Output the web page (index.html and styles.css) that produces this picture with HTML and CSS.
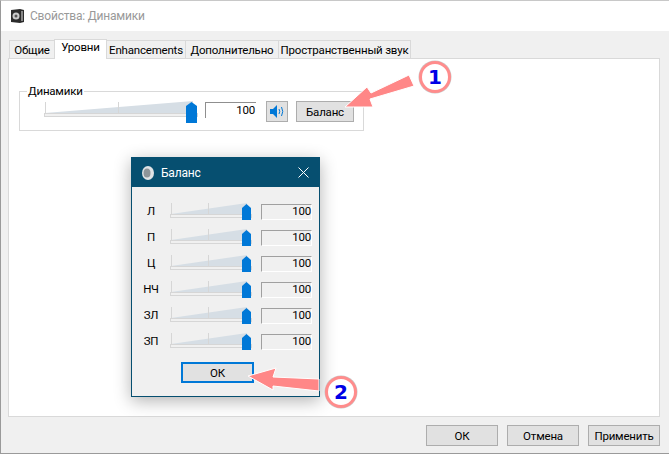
FILE: index.html
```html
<!DOCTYPE html>
<html lang="ru">
<head>
  <meta charset="UTF-8">
  <title>Свойства: Динамики</title>
  <link rel="stylesheet" href="styles.css">
</head>
<body>
  <svg class="defs" width="0" height="0">
    <symbol id="small-slider" viewBox="0 0 82 18">
      <path d="M1 11 L77 0 V11 Z" fill="#d6dee5"/>
      <rect x="0.500" y="11.500" width="81" height="3" fill="#f0f0f0" stroke="#d6d6d6"/>
      <rect x="1" y="0" width="1" height="11" fill="#d6d6d6"/>
      <rect x="38" y="0" width="1" height="11" fill="#d6d6d6"/>
      <path d="M72 17 V5 L76.500 1 L81 5 V17 Z" fill="#0078d7"/>
    </symbol>
  </svg>

  <div class="window">
    <div class="titlebar">
      <svg class="app-icon" width="13" height="14" viewBox="0 0 13 14">
        <path d="M0 1 L9 0 L13 1 V13 L9 14 L0 13 Z" fill="#2b2b2b"/>
        <circle cx="5" cy="7" r="3.500" fill="#c9c9c9"/>
        <circle cx="5" cy="7" r="1.500" fill="#555"/>
        <rect x="10" y="2" width="2" height="10" fill="#888"/>
      </svg>
      <span>Свойства: Динамики</span>
    </div>

    <div class="tabs">
      <div class="tab tab-first">Общие</div>
      <div class="tab tab-active">Уровни</div>
      <div class="tab tab-en">Enhancements</div>
      <div class="tab tab-more">Дополнительно</div>
      <div class="tab tab-space">Пространственный звук</div>
    </div>

    <div class="panel">
      <fieldset class="group">
        <legend>Динамики</legend>
        <svg class="slider" width="154" height="22" viewBox="0 0 154 22">
          <path d="M1 12 L149 0 V12 Z" fill="#d6dee5"/>
          <rect x="0.500" y="12.500" width="153" height="3" fill="#f0f0f0" stroke="#d6d6d6"/>
          <rect x="1" y="1" width="1" height="11" fill="#d6d6d6"/>
          <rect x="74" y="1" width="1" height="11" fill="#d6d6d6"/>
          <path d="M142 22 V5 L147.500 1 L153 5 V22 Z" fill="#0078d7"/>
        </svg>
        <div class="value">100</div>
        <button class="btn btn-mute">
          <svg width="16" height="15" viewBox="0 0 16 15">
            <path d="M1 5 H4 L8 1 V14 L4 10 H1 Z" fill="#0078d7"/>
            <path d="M10 5 Q11.500 7.500 10 10 M12.500 3 Q15 7.500 12.500 12" fill="none" stroke="#0078d7"/>
          </svg>
        </button>
        <button class="btn btn-balance">Баланс</button>
      </fieldset>
    </div>

    <div class="actions">
      <button class="btn btn-action">ОК</button>
      <button class="btn btn-action">Отмена</button>
      <button class="btn btn-action">Применить</button>
    </div>
  </div>

  <div class="dialog">
    <div class="dialog-title">
      <svg width="12" height="14" viewBox="0 0 12 14">
        <ellipse cx="6" cy="7" rx="6" ry="7" fill="#dfe3e6"/>
        <ellipse cx="5" cy="7" rx="3.500" ry="4.500" fill="#8d9499"/>
      </svg>
      <span class="dialog-name">Баланс</span>
      <svg class="dialog-close" width="11" height="11" viewBox="0 0 11 11">
        <path d="M0.500 0.500 L10.500 10.500 M10.500 0.500 L0.500 10.500" stroke="#fff" fill="none"/>
      </svg>
    </div>
    <div class="rows">
      <div class="row">
        <span class="row-label">Л</span>
        <svg class="row-slider" width="82" height="18"><use href="#small-slider"/></svg>
        <div class="row-value">100</div>
      </div>
      <div class="row">
        <span class="row-label">П</span>
        <svg class="row-slider" width="82" height="18"><use href="#small-slider"/></svg>
        <div class="row-value">100</div>
      </div>
      <div class="row">
        <span class="row-label">Ц</span>
        <svg class="row-slider" width="82" height="18"><use href="#small-slider"/></svg>
        <div class="row-value">100</div>
      </div>
      <div class="row">
        <span class="row-label">НЧ</span>
        <svg class="row-slider" width="82" height="18"><use href="#small-slider"/></svg>
        <div class="row-value">100</div>
      </div>
      <div class="row">
        <span class="row-label">ЗЛ</span>
        <svg class="row-slider" width="82" height="18"><use href="#small-slider"/></svg>
        <div class="row-value">100</div>
      </div>
      <div class="row">
        <span class="row-label">ЗП</span>
        <svg class="row-slider" width="82" height="18"><use href="#small-slider"/></svg>
        <div class="row-value">100</div>
      </div>
    </div>
    <div class="dialog-actions">
      <button class="btn btn-ok">ОК</button>
    </div>
  </div>

  <!-- callout arrows and numbers drawn over the windows -->
  <svg class="callouts" width="669" height="455" viewBox="0 0 669 455">
    <path d="M345 107 L367 87 L371 93 L409 75 L414 86 L370 99 L373 107 Z" fill="#ff8787" stroke="#fff"/>
    <circle cx="435" cy="77" r="16.500" fill="#c8c8c8"/>
    <circle cx="435" cy="77" r="14.500" fill="#fff" stroke="#ff8c8c" stroke-width="3"/>
    <text class="num" x="435" y="84">1</text>
    <path d="M248 376 L276 368 L273 377 L319 379 L319 391 L273 386 L273 390 Z" fill="#ff8787" stroke="#fff"/>
    <circle cx="341" cy="392" r="16.500" fill="#c8c8c8"/>
    <circle cx="341" cy="392" r="14.500" fill="#fff" stroke="#ff8c8c" stroke-width="3"/>
    <text class="num" x="341" y="399">2</text>
  </svg>
</body>
</html>
```

FILE: styles.css
```css
html, body {
  margin: 0;
  padding: 0;
  background: #fff;
}

body {
  width: 669px;
  height: 455px;
  position: relative;
  overflow: hidden;
  font-family: Roboto, "Noto Sans", sans-serif;
  font-size: 11.5px;
  letter-spacing: -0.2px;
  color: #000;
}

.defs {
  position: absolute;
}

.window {
  box-sizing: border-box;
  width: 669px;
  height: 454px;
  background: #f0f0f0;
  border-left: 1px solid #9a9a9a;
  border-bottom: 1px solid #9a9a9a;
  border-top: 1px solid #c8c8c8;
}

.titlebar {
  height: 30px;
  background: #fff;
  display: flex;
  align-items: center;
  gap: 6px;
  padding-left: 10px;
  color: #999;
  font-size: 12px;
}

.tabs {
  display: flex;
  align-items: flex-end;
  height: 27px;
  padding-left: 8px;
}

.tab {
  box-sizing: border-box;
  height: 18px;
  line-height: 18px;
  text-align: center;
  background: #f0f0f0;
  border: 1px solid #d9d9d9;
  border-bottom: 0;
  margin-left: -1px;
  white-space: nowrap;
}

.tab-first { width: 46px; margin-left: 0; }
.tab-active {
  width: 53px;
  height: 20px;
  background: #fff;
  line-height: 15px;
  position: relative;
  margin-bottom: -1px;
}
.tab-en { width: 80px; }
.tab-more { width: 94px; }
.tab-space { width: 133px; }

.panel {
  box-sizing: border-box;
  width: 652px;
  height: 359px;
  margin-left: 7px;
  background: #fff;
  border: 1px solid #d9d9d9;
  padding: 25px 0 0 10px;
}

.group {
  box-sizing: border-box;
  width: 345px;
  height: 47px;
  margin: 0;
  padding: 0;
  border: 1px solid #d9d9d9;
  display: flex;
  align-items: flex-start;
}

.group legend {
  padding: 0 1px;
  margin-left: 7px;
  line-height: 14px;
}

.slider {
  margin: 3px 0 0 24px;
  flex: none;
}

.value {
  box-sizing: border-box;
  width: 51px;
  height: 16px;
  margin: 4px 0 0 7px;
  padding-right: 1px;
  text-align: right;
  line-height: 14px;
  border-top: 1px solid #8f8f8f;
  border-left: 1px solid #8f8f8f;
}

.btn {
  box-sizing: border-box;
  padding: 0;
  background: #e1e1e1;
  border: 1px solid #adadad;
  font: inherit;
  letter-spacing: inherit;
  color: #000;
}

.btn-mute {
  width: 22px;
  height: 21px;
  margin: 3px 0 0 10px;
  display: flex;
  align-items: center;
  justify-content: center;
}

.btn-balance {
  width: 58px;
  height: 21px;
  margin: 3px 0 0 8px;
}

.actions {
  display: flex;
  justify-content: flex-end;
  gap: 9px;
  padding: 8px 9px 0 0;
}

.btn-action {
  width: 72px;
  height: 21px;
}

/* balance dialog floats over the properties window */
.dialog {
  box-sizing: border-box;
  position: absolute;
  left: 131px;
  top: 157px;
  width: 189px;
  height: 240px;
  background: #f0f0f0;
  border: 1px solid #064f70;
  box-shadow: 0 4px 16px rgba(0, 0, 0, 0.3);
}

.dialog-title {
  height: 29px;
  background: #064f70;
  color: #fff;
  display: flex;
  align-items: center;
  padding: 0 10px;
  font-size: 12px;
  gap: 7px;
}

.dialog-name {
  flex: 1;
}

.rows {
  display: flex;
  flex-direction: column;
  gap: 8px;
  padding-top: 16px;
}

.row {
  display: flex;
  height: 18px;
  align-items: flex-start;
}

.row-label {
  width: 38px;
  text-align: center;
  line-height: 17px;
}

.row-slider {
  flex: none;
}

.row-value {
  box-sizing: border-box;
  width: 51px;
  height: 16px;
  margin: 1px 0 0 9px;
  text-align: right;
  line-height: 13px;
  border: 1px solid #fff;
  border-top-color: #a0a0a0;
  border-left-color: #a0a0a0;
}

.dialog-actions {
  display: flex;
  padding: 11px 0 0 49px;
}

.btn-ok {
  width: 73px;
  height: 21px;
  border: 2px solid #0078d7;
}

.callouts {
  position: absolute;
  left: 0;
  top: 0;
}

.num {
  font-family: "DejaVu Sans", sans-serif;
  font-size: 20px;
  font-weight: bold;
  letter-spacing: 0;
  fill: #0000e6;
  text-anchor: middle;
}
```
